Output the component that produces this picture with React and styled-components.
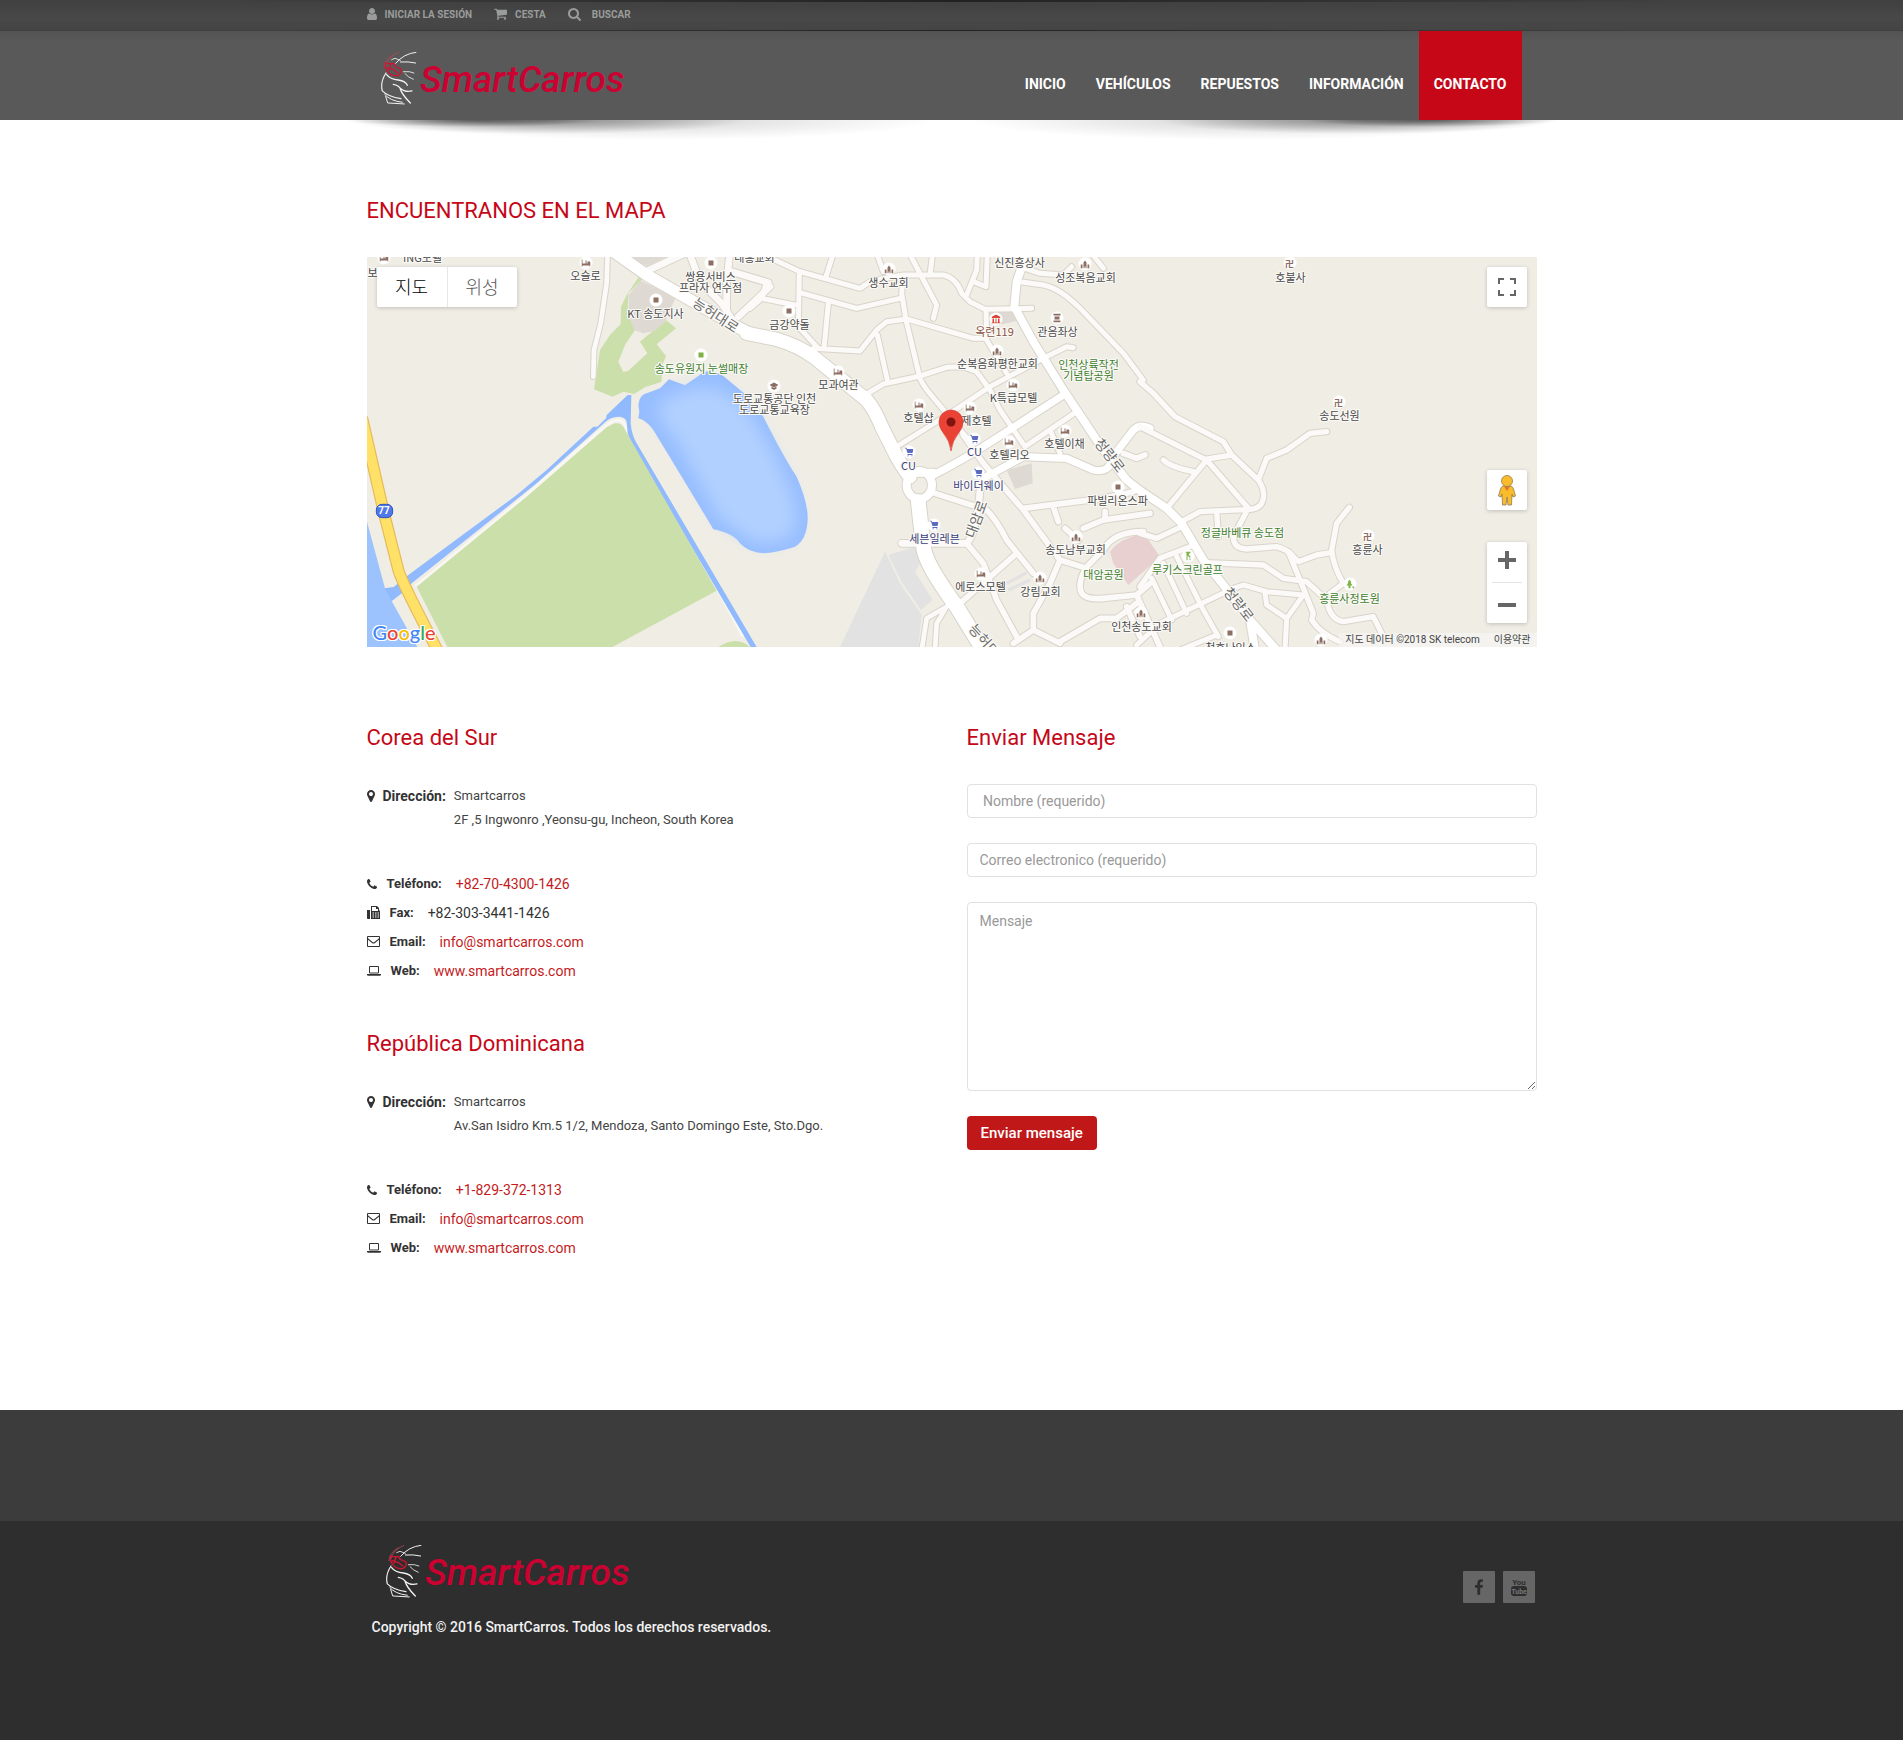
import React from 'react';
import styled, { createGlobalStyle } from 'styled-components';

const RED = '#c50718';

const GlobalStyle = createGlobalStyle`
  * { box-sizing: border-box; }
  body {
    margin: 0;
    background: #fff;
    color: #333;
    font-family: Roboto, "Noto Sans CJK KR", sans-serif;
    font-size: 14px;
  }
  a { color: inherit; text-decoration: none; }
  button, input, textarea { font: inherit; }
`;

const Page = styled.div`
  display: flex;
  flex-direction: column;
  min-height: 100vh;
`;

const Container = styled.div`
  width: 100%;
  max-width: 1170px;
  margin: 0 auto;
`;

/* ---------- icons ---------- */

const ICONS = {
  user: ['0 128 1280 1536', 'M1280 1399q0 109-62.5 187t-150.5 78h-854q-88 0-150.5-78t-62.5-187q0-85 8.5-160.5t31.5-152 58.5-131 94-89 134.5-34.5q131 128 313 128t313-128q76 0 134.5 34.5t94 89 58.5 131 31.5 152 8.5 160.5zm-256-887q0 159-112.5 271.5t-271.5 112.5-271.5-112.5-112.5-271.5 112.5-271.5 271.5-112.5 271.5 112.5 112.5 271.5z'],
  cart: ['64 192 1664 1472', 'M704 1536q0 52-38 90t-90 38-90-38-38-90 38-90 90-38 90 38 38 90zm896 0q0 52-38 90t-90 38-90-38-38-90 38-90 90-38 90 38 38 90zm128-1088v512q0 24-16.5 42.5t-40.5 21.5l-1044 122q13 60 13 70 0 16-24 64h920q26 0 45 19t19 45-19 45-45 19h-1024q-26 0-45-19t-19-45q0-11 8-31.5t16-36 21.5-40 15.5-29.5l-177-823h-204q-26 0-45-19t-19-45 19-45 45-19h256q16 0 28.5 6.5t19.5 15.5 13 24.5 8 26 5.5 29.5 4.5 26h1201q26 0 45 19t19 45z'],
  search: ['64 128 1664 1664', 'M1216 832q0-185-131.5-316.5t-316.5-131.5-316.5 131.5-131.5 316.5 131.5 316.5 316.5 131.5 316.5-131.5 131.5-316.5zm512 832q0 52-38 90t-90 38q-54 0-90-38l-343-342q-179 124-399 124-143 0-273.5-55.5t-225-150-150-225-55.5-273.5 55.5-273.5 150-225 225-150 273.5-55.5 273.5 55.5 225 150 150 225 55.5 273.5q0 220-124 399l343 343q37 37 37 90z'],
  pin: ['384 128 1024 1536', 'M1152 640q0-106-75-181t-181-75-181 75-75 181 75 181 181 75 181-75 75-181zm256 0q0 109-33 179l-364 774q-16 33-47.5 52t-67.5 19-67.5-19-46.5-52l-365-774q-33-70-33-179 0-212 150-362t362-150 362 150 150 362z'],
  phone: ['192 128 1408 1408', 'M1600 1240q0 27-10 70.5t-21 68.5q-21 50-122 106-94 51-186 51-27 0-53-3.5t-57.5-12.5-47-14.5-55.5-20.5-49-18q-98-35-175-83-127-79-264-216t-216-264q-48-77-83-175-3-9-18-49t-20.5-55.5-14.5-47-12.5-57.5-3.5-53q0-92 51-186 56-101 106-122 25-11 68.5-21t70.5-10q14 0 21 3 18 6 53 76 11 19 30 54t35 63.5 31 53.5q3 4 17.5 25t21.5 35.5 7 28.5q0 20-28.5 50t-62 55-62 53-28.5 46q0 9 5 22.5t8.5 20.5 14 24 11.5 19q76 137 174 235t235 174q2 1 19 11.5t24 14 20.5 8.5 22.5 5q18 0 46-28.5t53-62 55-62 50-28.5q14 0 28.5 7t35.5 21.5 25 17.5q25 15 53.5 31t63.5 35 54 30q70 35 76 53 3 7 3 21z'],
  fax: ['0 0 13 13', 'M0 4h3v9H0.8Q0 13 0 12.2ZM4 0h6l2 2v2.5h1V13H4ZM5 1v4h6V3H9V1ZM5.500 6.500v1h1.500v-1Zm2.500 0v1h1.500v-1Zm2.500 0v1h1.500v-1ZM5.500 8.500v1h1.500v-1Zm2.500 0v1h1.500v-1Zm2.500 0v1h1.500v-1ZM5.500 10.500v1h1.500v-1Zm2.500 0v1h1.500v-1Zm2.500 0v1h1.500v-1Z'],
  envelope: ['0 0 13 11', 'M1 0h11q1 0 1 1v9q0 1-1 1H1q-1 0-1-1V1Q0 0 1 0ZM1 1v0.700Q1.200 2.600 2.500 3.600L5.600 6.100q0.900 0.700 1.800 0L10.500 3.600Q11.800 2.600 12 1.700V1ZM1 3.700V10h11V3.700L8 7q-1.500 1.100-3 0Z'],
  laptop: ['0 0 14 10', 'M3 0h8q1 0 1 1v5.500q0 1-1 1H3q-1 0-1-1V1Q2 0 3 0ZM3 1v5.500h8V1ZM0 8h14v0.800q0 0.900-1.200 0.900H1.200Q0 9.700 0 8.800Z'],
  facebook: ['479 0 864 1664', 'M1343 12v264h-157q-86 0-116 36t-30 108v189h293l-39 296h-254v759h-306v-759h-255v-296h255v-218q0-186 104-288.500t277-102.500q147 0 228 12z'],
};

const Icon = ({ name, width, height }) => (
  <svg width={width} height={height} viewBox={ICONS[name][0]} aria-hidden="true">
    <path d={ICONS[name][1]} fill="currentColor" fillRule="evenodd" />
  </svg>
);

const LogoSvg = styled.svg`
  display: block;
  font: italic 500 37px Roboto, sans-serif;
`;

const Logo = () => (
  <LogoSvg width="250" height="53" role="img" aria-label="SmartCarros">
    <g transform="scale(0.333) translate(-108 -135)" fill="none" strokeLinecap="round">
      <g stroke="#f2f2f2" strokeWidth="3.500">
        <path d="M140 158L150 154 166 160" strokeWidth="2.500" />
        <path d="M152 169Q176 140 213 136M166 165Q190 163 212 168" strokeWidth="3" />
        <path d="M175 194Q195 192 207 198M180 200Q190 212 205 217" strokeWidth="2.500" />
        <path d="M123 198Q105 225 112 252Q130 270 168 275" />
        <path d="M125 203Q135 217 160 219Q182 222 187 235" strokeWidth="4" />
        <path d="M145 232Q160 235 165 243Q180 257 201 252M165 243Q170 262 196 288" strokeWidth="4" />
        <path d="M119 262Q135 282 172 286M122 268L128 288 178 291" strokeWidth="3" />
      </g>
      <g stroke="#d01533" strokeWidth="4">
        <path d="M162 136Q128 150 122 178M145 143Q118 158 117 182" strokeWidth="2.500" stroke="#a94a55" />
        <path d="M122 168Q130 172 146 169L150 178 168 186Q172 198 158 206Q140 208 128 194L120 180ZM126 182L146 188 158 198M138 172L132 190" />
      </g>
    </g>
    <text x="39" y="40" fill="#cb0131">SmartCarros</text>
  </LogoSvg>
);

/* ---------- header ---------- */

const TopBar = styled.div`
  height: 31px;
  background:
    linear-gradient(90deg, transparent 12%, rgba(20, 20, 20, 0.7) 50%, transparent 88%) 0 0 / 100% 2px no-repeat,
    linear-gradient(90deg, #414141 12%, #232323 50%, #414141 88%) 0 100% / 100% 1px no-repeat,
    linear-gradient(#404040, #484848 60%, #444);
  color: #999c9b;
`;

const TopLinks = styled(Container)`
  display: flex;
  align-items: center;
  height: 29px;
  gap: 22px;
`;

const topItem = `
  display: flex;
  align-items: center;
  gap: 8px;
  font-size: 10px;
  font-weight: 700;
  line-height: 12px;
`;
const TopLink = styled.a`
  ${topItem}
  svg { margin-bottom: 2px; }
`;
const TopButton = styled.button`
  ${topItem}
  gap: 11px;
  padding: 0;
  border: 0;
  background: none;
  color: inherit;
`;

const Header = styled.header`
  position: relative;
  background: linear-gradient(#535353, #595959 10px);
  &::after {
    content: "";
    position: absolute;
    left: 50%;
    top: 100%;
    width: 1230px;
    height: 24px;
    margin-left: -615px;
    pointer-events: none;
    background:
      radial-gradient(ellipse 125px 7px at 11% 0, rgba(0, 0, 0, 0.5), transparent),
      radial-gradient(ellipse 125px 7px at 89% 0, rgba(0, 0, 0, 0.5), transparent),
      radial-gradient(ellipse 200px 14px at 17% 0, rgba(0, 0, 0, 0.4), transparent),
      radial-gradient(ellipse 200px 14px at 83% 0, rgba(0, 0, 0, 0.4), transparent),
      radial-gradient(ellipse 280px 20px at 26% 0, rgba(0, 0, 0, 0.16), transparent),
      radial-gradient(ellipse 280px 20px at 74% 0, rgba(0, 0, 0, 0.16), transparent);
  }
`;

const HeaderRow = styled(Container)`
  display: flex;
  justify-content: space-between;
  height: 89px;
  padding: 0 15px 0 14px;
`;

const Brand = styled.a`
  margin-top: 21px;
`;

const Nav = styled.nav`
  display: flex;
`;

const NavLink = styled.a`
  padding: 45px 15px 0;
  font-weight: 700;
  font-size: 14px;
  line-height: 16px;
  color: #fff;
  background: ${(p) => (p.$active ? RED : 'transparent')};
`;

/* ---------- content ---------- */

const Main = styled(Container).attrs({ as: 'main' })`
  flex: none;
  padding: 79px 0 148px;
`;

const Heading = styled.h2`
  margin: 0 0 34px;
  font-size: 22px;
  line-height: 24px;
  font-weight: 400;
  color: ${RED};
`;

const Columns = styled.div`
  display: grid;
  grid-template-columns: 1fr 1fr;
  gap: 30px;
  margin-top: 79px;
`;

const Office = styled.section`
  & + & { margin-top: 47px; }
`;

const Address = styled.div`
  display: flex;
  align-items: flex-start;
  margin-bottom: 37px;
  line-height: 24px;
`;

const AddressLabel = styled.strong`
  display: flex;
  align-items: center;
  gap: 8px;
  margin-right: 8px;
  font-weight: 700;
`;

const AddressText = styled.div`
  font-size: 13px;
  color: #444;
`;

const ContactRow = styled.div`
  display: flex;
  align-items: center;
  height: 29px;
`;

const ContactLabel = styled.strong`
  margin: 0 14px 0 10px;
  font-size: 13px;
  font-weight: 700;
`;

const ContactLink = styled.a`
  color: #c41a1c;
`;

const Form = styled.form`
  display: grid;
  gap: 25px;
  justify-items: start;
`;

const field = `
  width: 100%;
  padding: 6px 12px;
  border: 1px solid #e1e1e1;
  border-radius: 4px;
  background: #fff;
  color: #333;
  font-size: 14px;
  line-height: 20px;
  &::placeholder { color: #999; opacity: 1; }
`;
const Input = styled.input`
  ${field}
  height: 34px;
`;
const TextArea = styled.textarea`
  ${field}
  display: block;
  height: 189px;
  padding-top: 8px;
`;
const Submit = styled.button`
  height: 34px;
  padding: 0 14px;
  border: 0;
  border-radius: 4px;
  background: #c01718;
  color: #fff;
  font-size: 15px;
  font-weight: 500;
`;

/* ---------- map ---------- */

const MapFrame = styled.div`
  position: relative;
  height: 390px;
  overflow: hidden;
  background: #f0ede5;
`;

const MapCanvas = styled.div`
  position: absolute;
  top: 0;
  left: 50%;
  width: 1170px;
  height: 390px;
  margin-left: -585px;
  svg { display: block; }
`;

const halo = (c) => `text-shadow: 1px 0 ${c}, -1px 0 ${c}, 0 1px ${c}, 0 -1px ${c}, 1px 1px ${c}, -1px -1px ${c}, 1px -1px ${c}, -1px 1px ${c};`;

const MapLabel = styled.span`
  position: absolute;
  transform: translate(-50%, -50%) rotate(${(p) => p.$turn || 0}deg);
  white-space: nowrap;
  text-align: center;
  font-family: "Noto Sans CJK KR", sans-serif;
  font-size: ${(p) => (p.$road ? 14 : 11)}px;
  line-height: 11px;
  color: ${(p) => p.$color};
  ${halo('#fbfaf7')}
`;

const PoiDot = styled.span`
  position: absolute;
  display: grid;
  place-items: center;
  width: 13px;
  height: 13px;
  border-radius: 50%;
  transform: translate(-50%, -50%);
  background: #fff;
  color: ${(p) => p.$color};
  font: 700 9px/13px "Noto Sans CJK KR", sans-serif;
`;

const controlBox = `
  border: 0;
  padding: 0;
  background: #fff;
  border-radius: 2px;
  box-shadow: 0 1px 4px rgba(0, 0, 0, 0.2);
`;

const TypeSwitch = styled.div`
  ${controlBox}
  position: absolute;
  left: 10px;
  top: 10px;
  display: flex;
  height: 40px;
`;

const TypeButton = styled.button`
  width: 70px;
  padding: 0 0 2px;
  border: 0;
  background: none;
  font-family: "Noto Sans CJK KR", sans-serif;
  font-size: 18px;
  font-weight: 300;
  color: ${(p) => (p.$active ? '#000' : '#565656')};
  & + & { border-left: 1px solid #e8e8e8; }
`;

const SideControls = styled.div`
  position: absolute;
  right: 10px;
  top: 10px;
  display: flex;
  flex-direction: column;
`;

const SquareButton = styled.button`
  ${controlBox}
  display: grid;
  place-items: center;
  width: 40px;
  height: 40px;
`;

const Pegman = styled(SquareButton)`
  margin: 163px 0 32px;
`;

const ZoomBox = styled.div`
  ${controlBox}
  width: 40px;
  height: 81px;
`;

const ZoomButton = styled.button`
  display: grid;
  place-items: center;
  width: 30px;
  height: 40px;
  margin: 0 5px;
  padding: 0 0 4px;
  border: 0;
  background: none;
  & + & {
    padding: 2px 0 0;
    border-top: 1px solid #e3e3e3;
  }
`;

const GoogleMark = styled.a`
  position: absolute;
  left: 6px;
  bottom: 2px;
  font: 500 20px/26px Lato, sans-serif;
  ${halo('#fff')}
`;
const Tint = styled.span`
  color: ${(p) => p.$color};
`;

const Attribution = styled.div`
  position: absolute;
  right: 0;
  bottom: 0;
  display: flex;
  gap: 14px;
  height: 14px;
  padding: 0 6px;
  background: rgba(245, 245, 245, 0.7);
  font-size: 10px;
  line-height: 14px;
  color: #444;
`;

// Map geometry is kept in three sheets of 3x units; each sheet has its own origin.
const WEST = -21;
const MID = 1149;
const EAST = 2319;

const ROADS = [
  [WEST, 14, 'M743 0L740 100 722 220 702 300 700 380'],
  [WEST, 20, 'M862 62L975 10M985 0L1020 95 1085 160 1130 230M1110 0L1100 100 1100 190M1105 62L1225 98M1135 200L1230 110'],
  [WEST, 34, 'M740 -10L860 75 1140 235 1170 250'],
  [MID, 15, 'M0 80L50 95 35 145 0 175M40 10L55 21 150 65 330 115 365 92 460 75 580 75Q620 85 635 130L660 155 705 178 845 175M148 65L145 230 200 290M250 10L228 80M235 160L222 295M35 145L135 165M150 128L320 175 450 145M460 75L455 130 468 210 510 385Q520 410 560 455L660 575M190 295L330 303 380 240 410 215 470 207 670 265 705 265M382 255L412 390M380 10L400 65M478 10L560 165 550 205M548 10L540 75M682 10L680 60 648 140M712 10L708 110 670 95M708 178L710 270 770 370'],
  [MID, 15, 'M345 435L400 402 510 378 590 352 640 350 680 365 720 420 750 480 825 590M440 590L600 490 720 410 880 325 950 290 970 293M810 50L870 70 940 75 965 50M1025 10L1060 55M980 485L825 590M900 540L930 610'],
  [MID, 17, 'M640 555L700 640 820 780 930 930 1010 955M820 775L1060 745 1150 725M910 770L925 815M1200 790L1060 810 1000 835M930 930L900 1000 850 1090 850 1140 930 1180M790 1180L850 1140M1065 785L1065 810M945 835L985 870M555 730L710 780Q740 810 770 870L850 970M650 880L700 940 740 1050 800 1160M630 1060L800 910M1120 610L1160 625 1185 615'],
  [MID, 17, 'M1180 845Q1090 845 1060 900L1010 950Q980 1000 995 1030 1010 1050 1060 1045L1160 1035 1200 1000M930 1175L1050 1105 1100 1105 1160 1060M1160 1035L1230 1191M1130 1070L1170 1160'],
  [MID, 14, 'M515 1200L530 1105 590 1070M555 1200L560 1120 590 1070'],
  [MID, 20, 'M455 880L650 880Q680 850 690 720'],
  [MID, 15, 'M810 95L880 105Q930 115 990 175L1120 310 1180 390'],
  [MID, 22, 'M550 675Q620 640 700 590L940 435M700 685L820 620 950 625 1030 660Q1080 670 1085 625L1150 540Q1170 520 1200 535'],
  [MID, 24, 'M830 10L800 95 793 170 850 275 940 420 1060 600 1130 690 1170 722'],
  [MID, 40, 'M-10 250L80 268Q140 285 190 320L350 450Q375 480 395 530L430 600Q455 650 480 680'],
  [MID, 24, 'M470 705A38 42 0 1 1 546 705A38 42 0 1 1 470 705M480 668L550 668'],
  [MID, 44, 'M505 755Q515 850 522 900 532 950 620 1070L700 1200'],
  [EAST, 16, 'M0 395L40 430 105 500 250 575 275 615 355 690Q375 720 370 745 365 775 330 778L180 785 125 815M0 530L195 628 275 615M355 690L380 625 440 600 510 550 560 545M70 630Q90 650 160 665M200 630L80 775M200 630L325 775Q290 840 280 860 280 895 320 897L410 890Q445 900 460 920L475 935 530 915 572 908'],
  [EAST, 16, 'M628 772L590 820 575 900Q580 950 610 1000L570 1030M230 785L235 860M0 850L50 865 125 830M0 1010L35 960 60 925 150 890M195 938L370 945 430 985 500 995 560 1050Q570 1110 610 1115L700 1100 735 1170M445 905L480 990 520 1090 515 1110Q540 1150 600 1175'],
  [EAST, 15, 'M-10 1185L60 1120 280 1015 310 1005 380 1025 490 1035 440 1105 380 1065 375 1030M440 1105L435 1200M110 920L190 1080 235 1160M70 940L140 1090M35 985L95 1110M120 1200L230 1155'],
  [EAST, 24, 'M-2 720L80 775 125 820 190 930 270 1030 330 1110 410 1200M330 1110L345 1200'],
];

const BROWN = '#8d6e63';
const INK = '#4a4a4a';
const GREEN = '#3f7f2f';
const NAVY = '#39407a';

// icon kind, icon x, icon y, label x, label y, label colour, lines
const PLACES = [
  ['bed', 17, 1, 56, 0, INK, 'ING모텔'],
  [null, 0, 0, 6, 15, INK, '보'],
  ['bed', 219, 6, 219, 18, INK, '오슬로'],
  ['square', 344, 6, 344, 25, INK, '쌍용서비스', '프라자 연수점'],
  ['square', 289, 43, 289, 56, INK, 'KT 송도지사'],
  ['park', 334, 98, 335, 111, GREEN, '송도유원지 눈썰매장'],
  [null, 0, 0, 388, 0, INK, '대흥교회'],
  ['school', 407, 129, 408, 147, INK, '도로교통공단 인천', '도로교통교육장'],
  ['church', 522, 12, 522, 25, INK, '생수교회'],
  [null, 0, 0, 653, 5, INK, '신진흥상사'],
  ['church', 718, 7, 719, 20, INK, '성조복음교회'],
  ['square', 422, 54, 423, 67, INK, '금강약돌'],
  ['fire', 629, 62, 628, 74, '#8d5547', '옥련119'],
  ['tower', 690, 61, 691, 74, INK, '관음좌상'],
  ['church', 630, 94, 631, 106, INK, '순복음화평한교회'],
  [null, 0, 0, 722, 113, GREEN, '인천상륙작전', '기념탑공원'],
  ['bed', 471, 115, 472, 127, INK, '모과여관'],
  ['bed', 646, 128, 647, 140, INK, 'K특급모텔'],
  ['bed', 552, 148, 552, 160, INK, '호텔샵'],
  ['bed', 603, 151, 610, 163, INK, '제호텔'],
  ['shop', 607, 182, 608, 194, NAVY, 'CU'],
  ['shop', 542, 195, 542, 208, NAVY, 'CU'],
  ['bed', 642, 185, 643, 197, INK, '호텔리오'],
  ['bed', 698, 174, 698, 186, INK, '호텔이채'],
  ['shop', 611, 216, 612, 228, NAVY, '바이더웨이'],
  ['square', 751, 230, 751, 243, INK, '파빌리온스파'],
  ['shop', 567, 268, 568, 281, NAVY, '세븐일레븐'],
  ['church', 709, 280, 709, 292, INK, '송도남부교회'],
  [null, 0, 0, 737, 317, GREEN, '대암공원'],
  ['bed', 614, 317, 614, 329, INK, '에로스모텔'],
  ['church', 673, 321, 674, 334, INK, '강림교회'],
  ['church', 774, 356, 775, 369, INK, '인천송도교회'],
  ['temple', 923, 6, 924, 20, INK, '호불사'],
  ['temple', 972, 145, 973, 158, INK, '송도선원'],
  [null, 0, 0, 876, 275, GREEN, '정글바베큐 송도점'],
  ['golf', 821, 299, 821, 312, GREEN, '루키스크린골프'],
  ['temple', 1001, 279, 1001, 292, INK, '흥륜사'],
  ['tree', 983, 327, 983, 341, GREEN, '흥륜사정토원'],
  ['square', 863, 376, 864, 390, INK, '천호나인스'],
  ['church', 954, 383, 0, 0, INK],
];

const ROAD_NAMES = [
  ['능허대로', 349, 58, 33],
  ['대암로', 609, 262, -70],
  ['청량로', 743, 198, 52],
  ['청량로', 872, 347, 52],
  ['능허대로', 622, 388, 48],
];

const GLYPHS = {
  bed: [BROWN, 'M0 1h1v4h3V2h1v3h1V3h2q1 0 1 1v4H8V7H1v1H0Z'],
  square: [BROWN, 'M2 2h5v5H2Z'],
  park: ['#7cb342', 'M2 2h5v5H2Z'],
  school: [BROWN, 'M4.500 1L9 3.500 4.500 6 0 3.500ZM2 5l2.500 1.500L7 5v2L4.500 8.500 2 7Z'],
  church: [BROWN, 'M0 5h2v4H0ZM3 3l1.500-2L6 3v6H5V7H4v2H3ZM7 5h2v4H7Z'],
  fire: ['#db4437', 'M4.500 0L9 2.500v1H0v-1ZM1 4h1.500v4H1ZM4 4h1v4H4ZM6.500 4H8v4H6.500ZM0 8h9v1H0Z'],
  tower: [BROWN, 'M1 0h7v2H1ZM2 3h5v3H2ZM1 7h7v2H1Z'],
  shop: ['#5c6bc0', 'M0 0h2l0.500 1.500H9L8 5.500H3L1.500 1H0ZM3 6.500h5v1H3ZM3 8h1.300v1H3ZM6.700 8H8v1H6.700Z'],
  golf: ['#7cb342', 'M2 0h5v1L5 3l2 2v1H6L4 4v5H3V1H2ZM6 7h1v2H6Z'],
  tree: ['#7cb342', 'M4 0l2 3H5l2 3H5v3H3V6H1l2-3H2ZM7 7h2v2H7Z'],
};

const ShapeLayer = () => (
  <svg width="1170" height="390" viewBox="0 0 3510 1170" aria-hidden="true">
    <defs>
      <filter id="soft" x="-20%" y="-20%" width="140%" height="140%">
        <feGaussianBlur stdDeviation="24" />
      </filter>
    </defs>
    <g transform={`translate(${WEST} -21)`}>
      <path fill="#cbdfab" d="M838 78L800 135 783 170 782 222 750 255 720 300 702 418 757 440 790 425 822 432 855 412 905 395 905 350 918 318 890 283 948 235 918 210 840 275 862 310 805 362 790 366 775 335 795 285 825 240 803 190 805 130 845 90Z" />
      <path fill="#dfd9d4" d="M842 92L948 140 915 215 885 242 850 250 822 240 806 190 806 135Z" />
      <path fill="#dfd9d4" d="M780 10L940 10 862 48Z" />
      <path fill="#9dc3ff" d="M21 815L75 1015 100 1012 125 1030 95 1053 172 1191 21 1191Z" />
      <path fill="none" stroke="#f8f7f2" strokeWidth="10" d="M165 1010L500 735 740 525Q790 490 800 540L1080 1030 1150 1160" />
      <path fill="#90b9fe" d="M95 1053L125 1030 155 1000 530 700 740 512Q755 500 780 500 797 503 800 515L803 550 815 585 1172 1191 1190 1191 830 580Q815 555 812 520L814 435 803 435 740 495 738 505 712 530 700 530 560 660 470 735 145 975 100 1012 75 1015Z" />
      <path fill="#cbdfab" d="M765 520Q780 518 790 530L1070 1022 757 1191 262 1191 170 1010 500 740 740 532ZM1075 1191Q1130 1155 1170 1191Z" />
      <path fill="#96bdff" d="M835 465Q838 435 860 430L900 415 927 388 975 406 1015 378Q1045 350 1090 378L1170 445 1210 500Q1270 620 1310 680 1345 760 1343 810 1340 870 1305 890 1260 905 1210 910 1165 908 1140 880 1120 850 1060 838 1050 820 880 540 860 512 835 505L838 485Z" />
      <path fill="#b1d0ff" filter="url(#soft)" d="M890 470Q950 420 1010 415 1080 400 1150 470 1220 550 1290 720 1325 810 1290 860 1230 890 1170 870L1075 800 950 570Q900 520 890 470Z" />
    </g>
    <g transform={`translate(${MID} -21)`}>
      <path fill="#e3e2e2" d="M405 905L270 1191 505 1191 515 1095 450 1000ZM415 915L495 890 510 940 495 965 548 1050 512 1080 455 995Z" />
      <path fill="#dfd9d4" d="M770 660L845 640 848 700 795 717ZM715 180L790 175 810 210 760 222 720 215Z" />
      <path fill="#e8cfd0" d="M1080 905Q1110 865 1165 855L1195 870 1230 920 1135 1005 1090 940Z" />
      <path fill="none" stroke="#e3e2e2" strokeWidth="10" d="M770 1000L830 968M775 1020L840 990" />
    </g>
    <g fill="none" strokeLinejoin="round" strokeLinecap="round">
      {ROADS.map(([sheet, w, d], i) => (
        <path key={i} d={d} transform={`translate(${sheet} -21)`} stroke="#d9d4ca" strokeWidth={w + 6} />
      ))}
      {ROADS.map(([sheet, w, d], i) => (
        <path key={i} d={d} transform={`translate(${sheet} -21)`} stroke={w > 21 ? '#fff' : '#fbfaf8'} strokeWidth={w} />
      ))}
      <g transform={`translate(${WEST} -21)`}>
        <path d="M8 510L72 790 115 960Q122 990 240 1215" stroke="#e6b95a" strokeWidth="36" />
        <path d="M8 510L72 790 115 960Q122 990 240 1215" stroke="#ffe168" strokeWidth="29" />
      </g>
    </g>
    <rect x="28" y="742" width="49" height="40" rx="17" fill="#4f78e8" stroke="#2f55c0" strokeWidth="3" />
  </svg>
);

const RouteBadge = styled.span`
  position: absolute;
  left: 9px;
  top: 247px;
  width: 17px;
  text-align: center;
  font: 700 10px/14px Roboto, sans-serif;
  color: #fff;
`;

const MarkerPin = styled.svg`
  position: absolute;
  left: 571px;
  top: 152px;
`;

const MapView = () => (
  <MapFrame>
    <MapCanvas>
      <ShapeLayer />
      <RouteBadge>77</RouteBadge>
      {ROAD_NAMES.map(([name, x, y, turn], i) => (
        <MapLabel key={i} $road $turn={turn} $color="#6b6b6b" style={{ left: x, top: y }}>{name}</MapLabel>
      ))}
      {PLACES.map(([kind, ix, iy, x, y, color, ...lines], i) => (
        <React.Fragment key={i}>
          {kind && (
            <PoiDot $color={BROWN} style={{ left: ix, top: iy }}>
              {kind === 'temple' ? '卍' : (
                <svg width="9" height="9" viewBox="0 0 9 9" aria-hidden="true">
                  <path d={GLYPHS[kind][1]} fill={GLYPHS[kind][0]} />
                </svg>
              )}
            </PoiDot>
          )}
          {lines.length > 0 && (
            <MapLabel $color={color} style={{ left: x, top: y }}>
              {lines.map((line, n) => (
                <React.Fragment key={n}>{n > 0 && <br />}{line}</React.Fragment>
              ))}
            </MapLabel>
          )}
        </React.Fragment>
      ))}
      <MarkerPin width="26" height="42" viewBox="0 0 26 42" aria-hidden="true">
        <path d="M13 42Q12 32 5 23.500Q1 18.500 1 13A12 12 0 0 1 25 13Q25 18.500 21 23.500Q14 32 13 42Z" fill="#ea4335" stroke="#d5372b" strokeWidth="0.600" />
        <circle cx="13" cy="13" r="4.500" fill="#811411" />
      </MarkerPin>
    </MapCanvas>
    <TypeSwitch>
      <TypeButton type="button" $active>지도</TypeButton>
      <TypeButton type="button">위성</TypeButton>
    </TypeSwitch>
    <SideControls>
      <SquareButton type="button" aria-label="Pantalla completa">
        <svg width="18" height="18" viewBox="0 0 18 18"><path d="M0 0h6v2H2v4H0ZM12 0h6v6h-2V2h-4ZM0 12h2v4h4v2H0ZM16 12h2v6h-6v-2h4Z" fill="#666" /></svg>
      </SquareButton>
      <Pegman type="button" aria-label="Street View">
        <svg width="18" height="31" viewBox="0 0 18 31">
          <path d="M5 11H13Q15 12 15.500 14L17.500 21 15 22 14 19 13.500 30H10L9 22 8 30H4.500L4 19 3 22 0.500 21 2.500 14Q3 12 5 11Z" fill="#fbbc2c" stroke="#8f7b55" strokeWidth="0.800" />
          <path d="M6 11.500H12L9 16Z" fill="#e0762a" />
          <circle cx="9" cy="6" r="5.500" fill="#fbbc2c" stroke="#8f7b55" strokeWidth="0.800" />
        </svg>
      </Pegman>
      <ZoomBox>
        <ZoomButton type="button" aria-label="Acercar">
          <svg width="18" height="18" viewBox="0 0 18 18"><path d="M7 0h4v7h7v4h-7v7H7v-7H0V7h7Z" fill="#666" /></svg>
        </ZoomButton>
        <ZoomButton type="button" aria-label="Alejar">
          <svg width="18" height="18" viewBox="0 0 18 18"><path d="M0 8h18v4H0Z" fill="#666" /></svg>
        </ZoomButton>
      </ZoomBox>
    </SideControls>
    <GoogleMark href="#google">
      <Tint $color="#4285f4">G</Tint><Tint $color="#ea4335">o</Tint><Tint $color="#fbbc05">o</Tint>
      <Tint $color="#4285f4">g</Tint><Tint $color="#34a853">l</Tint><Tint $color="#ea4335">e</Tint>
    </GoogleMark>
    <Attribution>
      <span>지도 데이터 ©2018 SK telecom</span>
      <a href="#terms">이용약관</a>
    </Attribution>
  </MapFrame>
);

/* ---------- footer ---------- */

const FooterBand = styled.div`
  height: 111px;
  background: #3c3c3c;
`;

const Footer = styled.footer`
  flex: 1;
  background: #2e2e2e;
  color: #f2f2f2;
`;

const FooterRow = styled(Container)`
  display: flex;
  justify-content: space-between;
  align-items: flex-start;
  padding: 24px 2px 60px 5px;
`;

const FooterBrand = styled.a`
  display: block;
  margin-left: 14px;
`;

const Copyright = styled.p`
  margin: 19px 0 0;
  font-size: 14px;
  line-height: 20px;
  font-weight: 500;
`;

const Social = styled.div`
  display: flex;
  gap: 8px;
  margin-top: 26px;
`;

const SocialLink = styled.a`
  display: grid;
  place-items: center;
  width: 32px;
  height: 32px;
  border-radius: 1px;
  background: #666;
  color: #2e2e2e;
`;

const YouTubeSvg = styled.svg`
  font: 700 8px Roboto, sans-serif;
  text-anchor: middle;
`;

/* ---------- page ---------- */

const NAV = ['INICIO', 'VEHÍCULOS', 'REPUESTOS', 'INFORMACIÓN', 'CONTACTO'];

const OFFICES = [
  {
    name: 'Corea del Sur',
    street: '2F ,5 Ingwonro ,Yeonsu-gu, Incheon, South Korea',
    rows: [
      ['phone', 10, 10, 'Teléfono:', '+82-70-4300-1426', 'tel:+827043001426'],
      ['fax', 13, 13, 'Fax:', '+82-303-3441-1426'],
      ['envelope', 13, 11, 'Email:', 'info@smartcarros.com', 'mailto:info@smartcarros.com'],
      ['laptop', 14, 10, 'Web:', 'www.smartcarros.com', '#web'],
    ],
  },
  {
    name: 'República Dominicana',
    street: 'Av.San Isidro Km.5 1/2, Mendoza, Santo Domingo Este, Sto.Dgo.',
    rows: [
      ['phone', 10, 10, 'Teléfono:', '+1-829-372-1313', 'tel:+18293721313'],
      ['envelope', 13, 11, 'Email:', 'info@smartcarros.com', 'mailto:info@smartcarros.com'],
      ['laptop', 14, 10, 'Web:', 'www.smartcarros.com', '#web'],
    ],
  },
];

export default function App() {
  return (
    <Page>
      <GlobalStyle />
      <TopBar>
        <TopLinks>
          <TopLink href="#login"><Icon name="user" width={10} height={12} />INICIAR LA SESIÓN</TopLink>
          <TopLink href="#cart"><Icon name="cart" width={13} height={12} />CESTA</TopLink>
          <TopButton type="button"><Icon name="search" width={13} height={13} />BUSCAR</TopButton>
        </TopLinks>
      </TopBar>
      <Header>
        <HeaderRow>
          <Brand href="#home"><Logo /></Brand>
          <Nav>
            {NAV.map((label) => (
              <NavLink key={label} href={`#${label.toLowerCase()}`} $active={label === 'CONTACTO'}>{label}</NavLink>
            ))}
          </Nav>
        </HeaderRow>
      </Header>
      <Main>
        <Heading>ENCUENTRANOS EN EL MAPA</Heading>
        <MapView />
        <Columns>
          <div>
            {OFFICES.map((office) => (
              <Office key={office.name}>
                <Heading>{office.name}</Heading>
                <Address>
                  <AddressLabel><Icon name="pin" width={8} height={12} />Dirección:</AddressLabel>
                  <AddressText>Smartcarros<br />{office.street}</AddressText>
                </Address>
                {office.rows.map(([icon, w, h, label, value, href]) => (
                  <ContactRow key={label}>
                    <Icon name={icon} width={w} height={h} />
                    <ContactLabel>{label}</ContactLabel>
                    {href ? <ContactLink href={href}>{value}</ContactLink> : <span>{value}</span>}
                  </ContactRow>
                ))}
              </Office>
            ))}
          </div>
          <section>
            <Heading>Enviar Mensaje</Heading>
            <Form onSubmit={(e) => e.preventDefault()}>
              <Input type="text" aria-label="Nombre" placeholder=" Nombre (requerido)" />
              <Input type="email" aria-label="Correo electronico" placeholder="Correo electronico (requerido)" />
              <TextArea aria-label="Mensaje" placeholder="Mensaje" />
              <Submit type="submit">Enviar mensaje</Submit>
            </Form>
          </section>
        </Columns>
      </Main>
      <FooterBand />
      <Footer>
        <FooterRow>
          <div>
            <FooterBrand href="#home"><Logo /></FooterBrand>
            <Copyright>Copyright © 2016 SmartCarros. Todos los derechos reservados.</Copyright>
          </div>
          <Social>
            <SocialLink href="#facebook" aria-label="Facebook"><Icon name="facebook" width={8} height={16} /></SocialLink>
            <SocialLink href="#youtube" aria-label="YouTube">
              <YouTubeSvg width="16" height="20" viewBox="0 0 16 20">
                <text x="8" y="8" fill="#2e2e2e">You</text>
                <rect y="9" width="16" height="10" rx="3" fill="#2e2e2e" />
                <text x="8" y="17" fill="#777" fontSize="7">Tube</text>
              </YouTubeSvg>
            </SocialLink>
          </Social>
        </FooterRow>
      </Footer>
    </Page>
  );
}
